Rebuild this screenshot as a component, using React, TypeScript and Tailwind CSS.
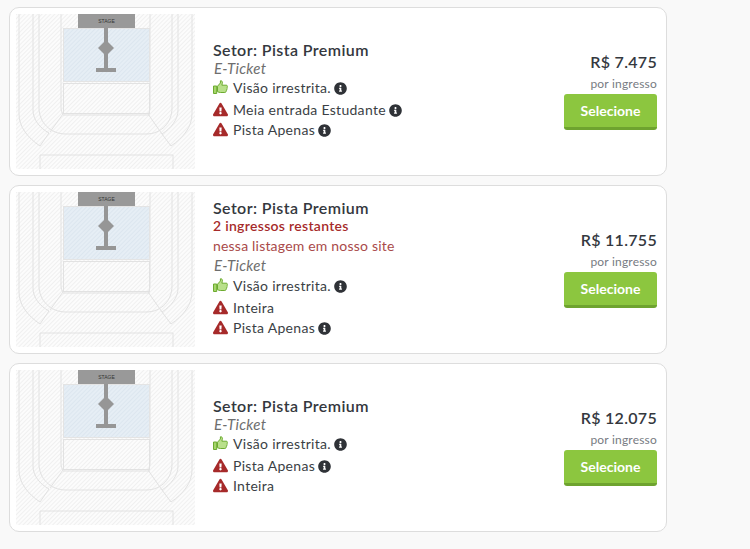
import { FaExclamationTriangle, FaInfoCircle } from "react-icons/fa";

const Thumb = () => (
  <svg width="15" height="14" viewBox="0 0 15 14" className="shrink-0">
    <path d="M0.5 6h3.2v7.5H0.5z" fill="#a5d46a" stroke="#6cab2f" strokeWidth="1" />
    <path
      d="M4.5 6.2 7.4 3V0.8c1.6-.3 2.4 1 1.9 2.6L8.9 5.2h4.4c1.2 0 1.4 1.3.7 1.9.5.6.4 1.5-.3 1.9.3.7.1 1.5-.6 1.8.2.9-.3 1.7-1.3 1.7H7.6c-1.2 0-2.1-.4-3.1-.8z"
      fill="#b9e08a"
      stroke="#6cab2f"
      strokeWidth="1"
    />
  </svg>
);

const SeatMap = ({ id }: { id: string }) => (
  <svg width="179" height="155" viewBox="0 0 179 155" className="shrink-0">
    <defs>
      <pattern id={id} width="3" height="3" patternUnits="userSpaceOnUse" patternTransform="rotate(45)">
        <rect width="3" height="3" fill="#fcfcfc" />
        <rect width="1" height="3" fill="#f0f0f0" />
      </pattern>
      <pattern id={`${id}b`} width="3" height="3" patternUnits="userSpaceOnUse" patternTransform="rotate(45)">
        <rect width="3" height="3" fill="#e6eef5" />
        <rect width="1" height="3" fill="#dce6ef" />
      </pattern>
    </defs>
    <rect width="179" height="155" fill={`url(#${id})`} />
    <g fill="none" stroke="#e2e2e2" strokeWidth="1">
      <path d="M3 0V100C3 113 12 124 24 132L33 119" />
      <path d="M17 0V96C17 106 24 114 33 119" />
      <path d="M23 0V94C23 108 34 120 50 120H130C146 120 156 108 156 94V0" />
      <path d="M45 0V93C45 97 46 99 47 100L34 118" />
      <path d="M134 0V93C134 97 133 99 132 100L146 120" />
      <path d="M162 0V96C162 106 155 114 146 120" />
      <path d="M176 0V100C176 113 167 124 155 132L146 120" />
      <path d="M24 155V141H157V155" />
      <path d="M47 101H134" />
    </g>
    <rect x="47.5" y="14.5" width="86" height="53" fill={`url(#${id}b)`} stroke="#e4e4e4" />
    <rect x="47.5" y="69.5" width="86" height="30" fill="none" stroke="#e2e2e2" />
    <rect x="62" y="0" width="57" height="14" fill="#999999" />
    <text x="90.5" y="8.5" textAnchor="middle" fontSize="5" fill="#333333" fontFamily="Liberation Sans, sans-serif">
      STAGE
    </text>
    <g fill="#969696">
      <rect x="88" y="14" width="4" height="42" />
      <path d="M90 26 98 34 90 42 82 34z" />
      <rect x="80" y="54" width="20" height="4" />
    </g>
  </svg>
);

const Row = ({ kind, label, info, className }: any) => (
  <div className={`flex items-center h-5 ${className ?? ""}`}>
    <span className="w-[20px] shrink-0 flex items-center">
      {kind === "ok" ? <Thumb /> : <FaExclamationTriangle size={15} className="text-[#a62a2a]" />}
    </span>
    <span className="text-[14px] text-[#3b3f45] tracking-[0.3px]">{label}</span>
    {info && <FaInfoCircle size={13} className="ml-[3px] mt-[2px] text-[#2f3237]" />}
  </div>
);

const Card = ({ id, price, stock, rows }: any) => (
  <div className="h-[169px] w-[658px] rounded-[10px] border border-[#dddddd] bg-white p-1.5 flex items-center">
    <SeatMap id={id} />
    <div className="ml-[18px] flex-1 flex flex-col pb-[2px]">
      <div className="h-[18px] pb-[2px] flex items-center text-[16px] font-semibold text-[#34383e] tracking-[0.4px]">
        Setor: Pista Premium
      </div>
      {stock && (
        <>
          <div className="h-[17px] pb-[2px] flex items-center text-[14px] font-semibold text-[#a62a2a] tracking-[0.3px]">
            2 ingressos restantes
          </div>
          <div className="h-[23px] pb-[2px] flex items-center text-[14px] text-[#a94a4a] tracking-[0.2px]">
            nessa listagem em nosso site
          </div>
        </>
      )}
      <div className={`h-[15px] flex items-center text-[15px] italic text-[#6e6e6e] tracking-[0.3px] pl-px ${stock ? "" : "pt-px"}`}>
        E-Ticket
      </div>
      <Row kind="ok" label="Visão irrestrita." info className="h-6" />
      {rows.map((r: any) => (
        <Row key={r.label} kind="warn" label={r.label} info={r.info} />
      ))}
    </div>
    <div className="self-start mt-[38px] mr-[3px] w-[93px] flex flex-col items-end">
      <div className="h-5 flex items-center text-[16px] font-semibold text-[#34383e] whitespace-nowrap tracking-[0.3px]">
        {price}
      </div>
      <div className="h-[22px] flex items-end pb-px text-[12px] text-[#777b82] whitespace-nowrap tracking-[0.2px]">
        por ingresso
      </div>
      <button className="h-9 w-[93px] rounded-[3px] border-b-[3px] border-[#6ea32f] bg-[#8cc63f] text-[14px] font-bold text-white">
        Selecione
      </button>
    </div>
  </div>
);

export default function App() {
  return (
    <div className="w-[750px] h-[549px] overflow-hidden bg-[#f9f9f9] pl-[9px] pt-[7px] flex flex-col gap-[9px] font-['Lato',sans-serif]">
      <Card
        id="hatch1"
        price="R$ 7.475"
        rows={[
          { label: "Meia entrada Estudante", info: true },
          { label: "Pista Apenas", info: true },
        ]}
      />
      <Card
        id="hatch2"
        price="R$ 11.755"
        stock
        rows={[{ label: "Inteira" }, { label: "Pista Apenas", info: true }]}
      />
      <Card
        id="hatch3"
        price="R$ 12.075"
        rows={[{ label: "Pista Apenas", info: true }, { label: "Inteira" }]}
      />
    </div>
  );
}
